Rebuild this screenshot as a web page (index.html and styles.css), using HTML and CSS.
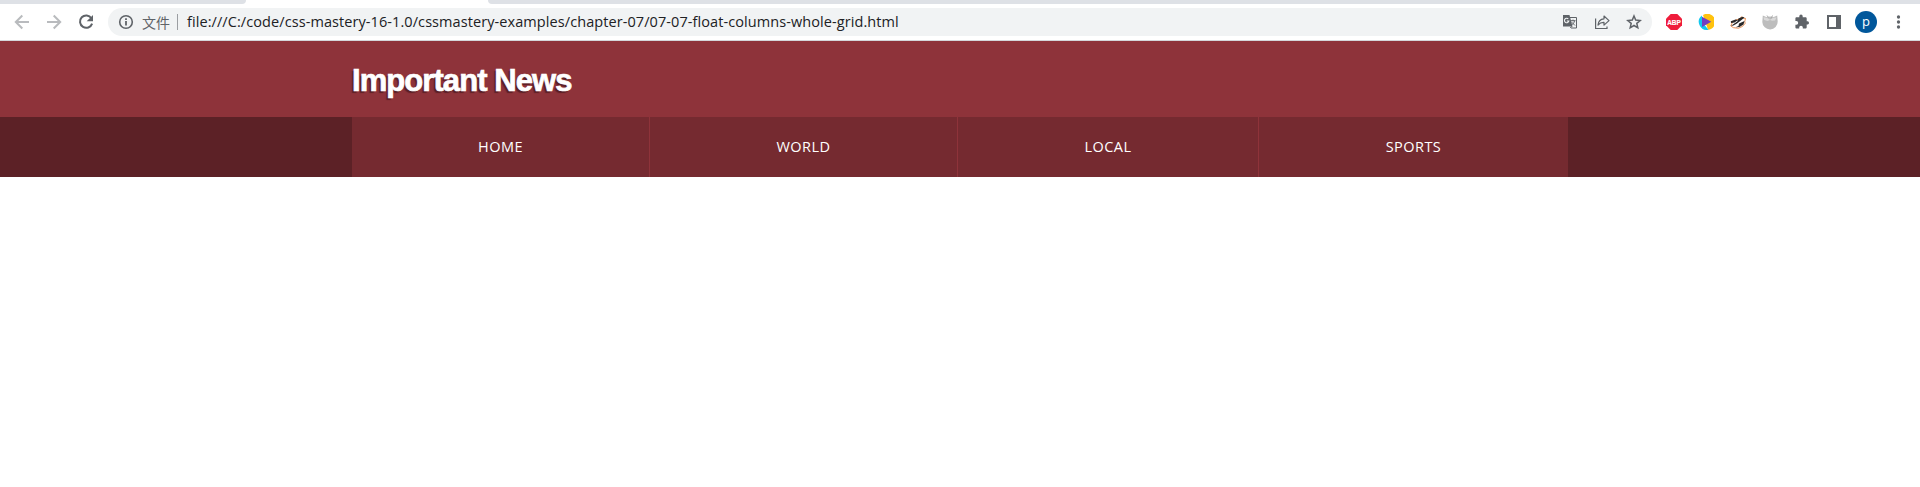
FILE: index.html
```html
<!DOCTYPE html>
<html lang="en">
<head>
<meta charset="utf-8">
<title>Important News</title>
<link rel="stylesheet" href="styles.css">
</head>
<body>
<div class="tabs"><div class="tab-left"></div><div class="tab-active"></div><div class="tab-right"></div></div>
<div class="toolbar">
  <div class="controls">
    <svg class="faded" width="16" height="16" viewBox="0 0 16 16"><path d="M15 8H2M8.3 1.5 1.8 8l6.5 6.5" fill="none" stroke="currentColor" stroke-width="2"/></svg>
    <svg class="faded" width="16" height="16" viewBox="0 0 16 16"><path d="M1 8h13M7.7 1.5 14.2 8l-6.5 6.5" fill="none" stroke="currentColor" stroke-width="2"/></svg>
    <svg width="16" height="16" viewBox="0 0 16 16"><path d="M13.4 4.2A6.2 6.2 0 1 0 14.1 9.6" fill="none" stroke="currentColor" stroke-width="2"/><path d="M15 1v6.3H8.7z" fill="currentColor"/></svg>
  </div>
  <div class="address">
    <svg class="info" width="16" height="16" viewBox="0 0 16 16"><circle cx="8" cy="8" r="6.3" fill="none" stroke="currentColor" stroke-width="1.6"/><path d="M7.1 7h1.8v4.6H7.1zM7.1 4.2h1.8v1.7H7.1z" fill="currentColor"/></svg>
    <span class="scheme">文件</span>
    <span class="url">file:///C:/code/css-mastery-16-1.0/cssmastery-examples/chapter-07/07-07-float-columns-whole-grid.html</span>
    <div class="actions">
      <svg width="16" height="16" viewBox="0 0 16 16"><path d="M8 3.5h6.500v10.500H9" fill="none" stroke="currentColor"/><path d="M1 1h6.500l3 11.500H1z" fill="currentColor"/><path d="M6.300 5A2.200 2.200 0 1 0 6.800 7H4.800" fill="none" stroke="#f1f3f4" stroke-width="1.100"/><path d="M8.800 6.700h4.700M11 5.600v1.100M12.500 6.800c-.3 2-1.600 3.500-3 4.300M9.700 8.200l3.300 3.300M8.200 14l1.800-1.800" fill="none" stroke="currentColor"/></svg>
      <svg width="16" height="16" viewBox="0 0 16 16"><path d="M1.600 4.500v10h11.400V12.500" fill="none" stroke="currentColor" stroke-width="1.200"/><path d="M4 11c.3-4 2.500-5.900 6-6.200V2l5 4.600-5 4.500V8.400C7.600 8.300 5.700 9 4 11z" fill="none" stroke="currentColor" stroke-width="1.200" stroke-linejoin="round"/></svg>
      <svg width="16" height="16" viewBox="0 0 16 16"><path d="m8 2 1.700 4.100 4.500.4-3.400 2.900 1 4.400L8 11.500l-3.800 2.300 1-4.400-3.400-2.900 4.500-.4z" fill="none" stroke="currentColor" stroke-width="1.500"/></svg>
    </div>
  </div>
  <div class="extensions">
    <svg class="adblock" width="16" height="16" viewBox="0 0 16 16"><path d="M4.700 0h6.600L16 4.700v6.600L11.300 16H4.700L0 11.300V4.700z" fill="#ef1c3b"/><text x="1.200" y="11" textLength="13.600" lengthAdjust="spacingAndGlyphs" class="abp">ABP</text></svg>
    <svg width="16" height="16" viewBox="0 0 16 16"><path d="M5 1a8 8 0 1 1 5 14.700z" fill="#ffc20e"/><path d="M4 1.500A8 8 0 0 0 10.500 15.700L4 8z" fill="#12c8ef"/><path d="m4 2.800 9.300 5L4 13z" fill="#733ec0"/></svg>
    <svg width="16" height="16" viewBox="0 0 16 16"><path d="M.8 12 2.500 8 6 6l3-1 3-2.300.8 1.500 2.700.2-.7 3 .3 2-2.600 3-4 1.800-5-.5z" fill="#fff" stroke="#e4772d" stroke-width=".8"/><path d="M.8 7.200 5.500 5.500 8 6 4.500 8.500 1 9zM8.500 4.500l4-1.800 2 .8-3 2.500-4.500 3.500-3.500 2-2.700.5 3.500-2.500 3-2zM9 9.500 14.500 7l-1 3.500L9.500 13l-4 .3 3-1.300z" fill="#292829"/></svg>
    <svg width="16" height="16" viewBox="0 0 16 16"><path d="M.8 1.500 4.200 3 8 2.500l3.800.5 3.400-1.500.5 6A7.700 7.700 0 0 1 .3 8z" fill="#bdbdbd"/><path d="m1.500 3.200 3.500.5 3 2 3-2 3.500-.2-1.500 3-3 .3-2-.8-2.500 1-3.300-1z" fill="#d9d9d9"/><path d="m5 1.500 1.500 2M10.500 1.500l-1.500 3" stroke="#aaa"/></svg>
    <svg width="16" height="16" viewBox="0 0 16 16"><path d="M13.700 7.300h-1V4.600c0-.8-.6-1.300-1.300-1.300H8.700v-1a1.700 1.700 0 0 0-3.400 0v1H2.700c-.8 0-1.300.5-1.300 1.200v2.600h1a1.800 1.800 0 0 1 0 3.600h-1v2.500c0 .8.5 1.300 1.300 1.300h2.500v-1a1.800 1.800 0 0 1 3.600 0v1h2.600c.7 0 1.300-.6 1.300-1.300v-2.600h1a1.700 1.700 0 0 0 0-3.300z" fill="currentColor"/></svg>
    <svg width="16" height="16" viewBox="0 0 16 16"><path d="M1 1h14v14H1zM3 3v10h7V3z" fill="currentColor" fill-rule="evenodd"/></svg>
    <span class="avatar">p</span>
    <svg width="16" height="16" viewBox="0 0 16 16"><g fill="currentColor"><circle cx="8.500" cy="3" r="1.650"/><circle cx="8.500" cy="8" r="1.650"/><circle cx="8.500" cy="13" r="1.650"/></g></svg>
  </div>
</div>
<header class="masthead"><h1>Important News</h1></header>
<nav class="navbar"><ul><li>HOME</li><li>WORLD</li><li>LOCAL</li><li>SPORTS</li></ul></nav>
</body>
</html>
```
FILE: styles.css
```css
* { box-sizing: border-box; }
body { margin: 0; background: #fff; font-family: "Open Sans", "Noto Sans", sans-serif; }
svg { display: block; flex: none; }
.tabs { display: flex; height: 4px; background: #fff; }
.tab-left, .tab-right { background: #dee1e6; }
.tab-left { width: 246px; border-bottom-right-radius: 5px; }
.tab-active { width: 242px; }
.tab-right { flex: 1; border-bottom-left-radius: 5px; }
.toolbar { display: flex; align-items: center; height: 37px; padding-bottom: 1px; border-bottom: 1px solid #d5d7da; color: #5f6368; }
.controls { display: flex; gap: 16px; width: 108px; padding-left: 14px; }
.faded { color: #b9bbbe; }
.address { display: flex; align-items: center; width: 1544px; height: 28px; padding: 0 10px; border-radius: 14px; background: #f1f3f4; }
.scheme { margin-left: 8px; width: 28px; font: 14px/20px "Noto Sans CJK SC", sans-serif; white-space: nowrap; }
.url { margin-left: 7px; padding-left: 9px; border-left: 1px solid #9b9ea2; height: 16px; line-height: 15px; font-size: 14.5px; letter-spacing: .08px; color: #202124; white-space: nowrap; }
.actions { display: flex; gap: 16px; margin-left: auto; }
.extensions { display: flex; align-items: center; gap: 16px; padding-left: 14px; }
.adblock { overflow: visible; }
.abp { font: bold 8px "Liberation Sans", sans-serif; fill: #fff; stroke: #fff; stroke-width: .2px; }
.avatar { width: 22px; height: 22px; margin: 0 -3px; border-radius: 50%; background: #01579b; color: #fff; font-size: 13px; line-height: 20px; text-align: center; }
.masthead { height: 76px; padding-left: 352px; background: #8e333a; }
h1 { margin: 0; padding-top: 22px; font: bold 31px/36px "Liberation Sans", sans-serif; letter-spacing: -.93px; color: #fff; text-shadow: -2px 2px 1px #5b2026; -webkit-text-stroke: .7px #fff; }
.navbar { height: 60px; padding: 0 352px; background: #5c2126; }
.navbar ul { display: grid; grid-template-columns: 297px 308px 301px 310px; height: 60px; margin: 0; padding: 0; list-style: none; background: #752a30; }
.navbar li { color: #fff; font-size: 14.5px; letter-spacing: .45px; line-height: 60px; text-align: center; }
.navbar li + li { border-left: 1px solid #8e333a; }
```
